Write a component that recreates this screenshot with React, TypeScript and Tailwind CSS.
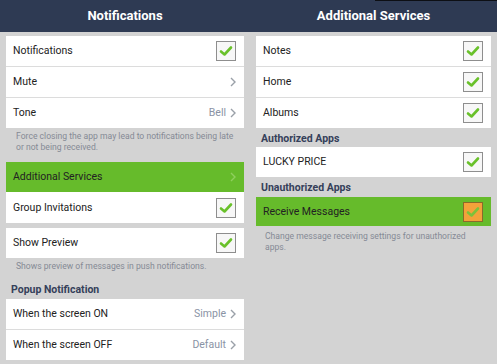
import type { ReactNode } from 'react'

const font = { fontFamily: 'Roboto, "Liberation Sans", Arial, sans-serif' }

function Check({ orange = false }: { orange?: boolean }) {
    return (
        <div
            className={`w-[20px] h-[20px] flex items-center justify-center border ${
                orange ? 'bg-[#f3a23a] border-[#8a6a2a]' : 'bg-[#f7f7f7] border-[#8e8e8e]'
            }`}
        >
            <svg width="14" height="12" viewBox="0 0 14 12">
                <path
                    d="M2 6.5 L5.5 9.5 L12 2.5"
                    fill="none"
                    stroke={orange ? '#7cc23a' : '#69c12a'}
                    strokeWidth="2.6"
                    strokeLinecap="round"
                    strokeLinejoin="round"
                />
            </svg>
        </div>
    )
}

function Chevron({ light = false }: { light?: boolean }) {
    return (
        <svg width="6" height="10" viewBox="0 0 6 10" className="ml-[4px]">
            <path
                d="M1 1 L5 5 L1 9"
                fill="none"
                stroke={light ? '#8fcf5e' : '#9aa0a8'}
                strokeWidth="1.4"
            />
        </svg>
    )
}

function Row({
    label,
    right,
    green = false,
    last = false,
    h,
}: {
    label: string
    right?: ReactNode
    green?: boolean
    last?: boolean
    h?: string
}) {
    const height = h ?? (last ? 'h-[30px]' : 'h-[31px]')
    return (
        <div
            className={`flex items-center justify-between pl-[7px] pr-[8px] ${height} ${
                green ? 'bg-[#66bb2b]' : 'bg-white'
            } ${last ? '' : 'border-b border-[#dcdcdc]'}`}
        >
            <span className="text-[10.5px] text-[#222]">{label}</span>
            <div className="flex items-center">{right}</div>
        </div>
    )
}

function Value({ text }: { text: string }) {
    return (
        <>
            <span className="text-[10.5px] text-[#8a93a5]">{text}</span>
            <Chevron />
        </>
    )
}

function Help({ children, px = 'pl-[10px] pr-[2px]' }: { children: ReactNode; px?: string }) {
    return <p className={`${px} text-[8.6px] leading-[11px] text-[#858a95]`}>{children}</p>
}

function Label({ text }: { text: string }) {
    return <div className="pl-[5px] text-[10.5px] leading-[13px] font-bold text-[#35405a]">{text}</div>
}

function Header({ title }: { title: string }) {
    return (
        <div className="h-[32px] bg-[#2e3a53] flex items-center justify-center">
            <span className="text-white font-bold text-[13px]">{title}</span>
        </div>
    )
}

export default function App() {
    return (
        <div className="w-[497px] h-[364px] bg-[#d3d3d3] flex overflow-hidden" style={font}>
            <div className="w-[250px] flex flex-col">
                <Header title="Notifications" />
                <div className="px-[6px] pt-[4px] flex flex-col">
                    <div>
                        <Row label="Notifications" right={<Check />} />
                        <Row label="Mute" right={<Chevron />} />
                        <Row label="Tone" right={<Value text="Bell" />} last />
                    </div>
                    <div className="pt-[3px] pb-[9px]">
                        <Help>
                            Force closing the app may lead to notifications being late or not being received.
                        </Help>
                    </div>
                    <div>
                        <Row label="Additional Services" right={<Chevron light />} green last />
                        <Row label="Group Invitations" right={<Check />} last h="h-[31px]" />
                    </div>
                    <div className="mt-[5px]">
                        <Row label="Show Preview" right={<Check />} last />
                    </div>
                    <div className="pt-[3px]">
                        <Help>Shows preview of messages in push notifications.</Help>
                    </div>
                    <div className="pt-[11px] pb-[3px]">
                        <Label text="Popup Notification" />
                    </div>
                    <div>
                        <Row label="When the screen ON" right={<Value text="Simple" />} />
                        <Row label="When the screen OFF" right={<Value text="Default" />} last />
                    </div>
                </div>
            </div>
            <div className="flex-1 flex flex-col relative">
                <div className="absolute top-0 right-0 w-[122px] h-[1px] bg-[#0d0f14]" />
                <Header title="Additional Services" />
                <div className="px-[6px] pt-[4px] flex flex-col">
                    <div>
                        <Row label="Notes" right={<Check />} />
                        <Row label="Home" right={<Check />} />
                        <Row label="Albums" right={<Check />} last />
                    </div>
                    <div className="pt-[4px] pb-[2px]">
                        <Label text="Authorized Apps" />
                    </div>
                    <Row label="LUCKY PRICE" right={<Check />} last />
                    <div className="pt-[4px] pb-[3px]">
                        <Label text="Unauthorized Apps" />
                    </div>
                    <Row label="Receive Messages" right={<Check orange />} green last h="h-[29px]" />
                    <div className="pt-[5px]">
                        <Help px="pl-[9px] pr-[22px]">
                            Change message receiving settings for unauthorized apps.
                        </Help>
                    </div>
                </div>
            </div>
        </div>
    )
}
